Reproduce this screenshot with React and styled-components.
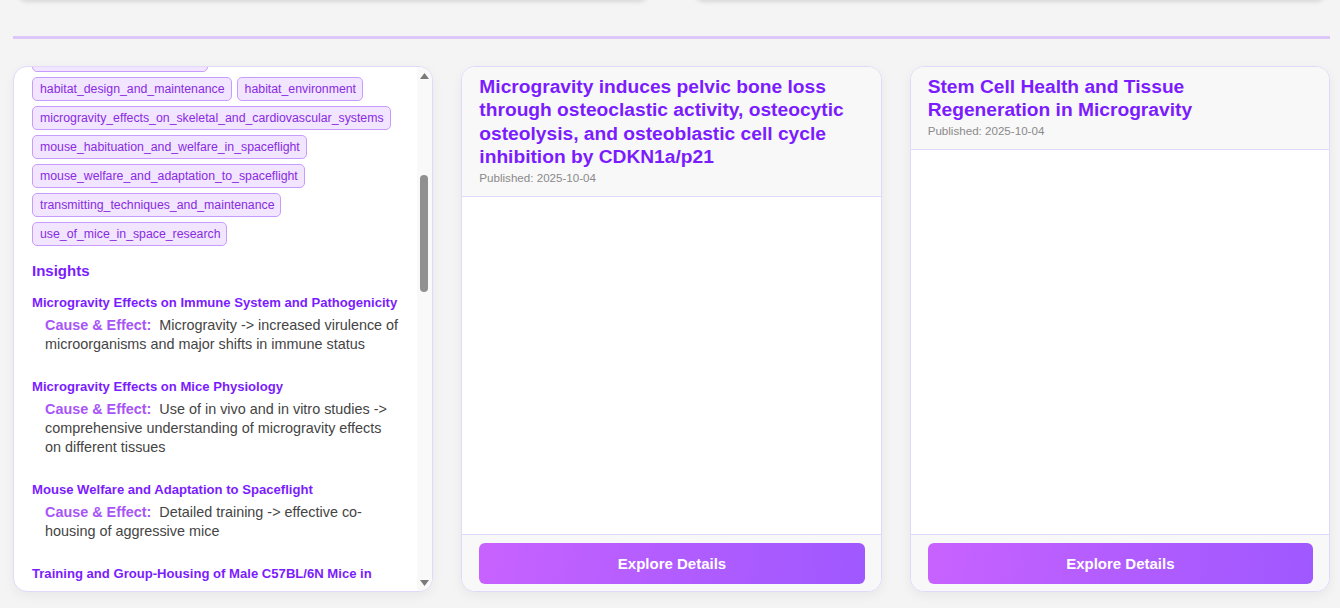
import React, { useLayoutEffect, useRef, useState } from "react"
import styled, { createGlobalStyle } from "styled-components"

const GlobalStyle = createGlobalStyle`
  html, body {
    margin: 0;
    padding: 0;
    background: #f4f4f4;
    font-family: "Liberation Sans", Arial, sans-serif;
  }
  * {
    box-sizing: border-box;
  }
`

const Page = styled.div`
  padding: 24px 10px 40px 13px;
`

const TopRow = styled.div`
  display: grid;
  grid-template-columns: 1fr 1fr;
  gap: 43px;
  padding: 0 3px;
`

const StatCard = styled.div`
  height: 140px;
  background: #fff;
  border-radius: 12px;
  box-shadow: 0 2px 4px rgba(0, 0, 0, 0.12);
`

const Divider = styled.div`
  height: 3px;
  background: #dcc7f8;
  margin: 36px 0 27px;
`

const Grid = styled.div`
  display: grid;
  grid-template-columns: repeat(3, 1fr);
  gap: 28px;
  height: 526px;
`

const Card = styled.div`
  display: flex;
  flex-direction: ${(p) => (p.$row ? "row" : "column")};
  min-height: 0;
  background: #fff;
  border: 1px solid #e2d8fb;
  border-radius: 14px;
  overflow: hidden;
  box-shadow: 0 4px 12px rgba(0, 0, 0, 0.05);
`

const DetailScroll = styled.div`
  flex: 1;
  min-width: 0;
  position: relative;
  overflow-y: scroll;
  scrollbar-width: none;
  padding: 0 17px 0 18px;

  &::-webkit-scrollbar {
    display: none;
  }
`

const Rail = styled.div`
  flex: 0 0 15px;
  display: flex;
  flex-direction: column;
  background: #f9f9f9;
`

const RailButton = styled.div`
  flex: 0 0 16px;
  display: flex;
  align-items: ${(p) => (p.$down ? "flex-start" : "flex-end")};
  justify-content: center;
  padding: ${(p) => (p.$down ? "5px" : "0")} 0 ${(p) => (p.$down ? "0" : "4px")};
  padding-right: 1px;
`

const RailTrack = styled.div`
  flex: 1;
  display: flex;
  flex-direction: column;
  align-items: flex-start;
  padding-left: 3px;
`

const Thumb = styled.div`
  width: 8px;
  background: #909090;
  border-radius: 4px;
`

const DetailContent = styled.div`
  min-height: 2203px;
  padding-bottom: 24px;
`

const DetailTitle = styled.h2`
  margin: 0;
  padding-top: 12px;
  font-size: 19.2px;
  line-height: 23px;
  font-weight: 700;
  color: #7b1cff;
`

const Published = styled.div`
  font-size: 11.6px;
  color: #8a8a8a;
  margin-top: 2px;
`

const SectionHeading = styled.h3`
  margin: ${(p) => p.$top || 20}px 0 ${(p) => p.$bottom || 12}px;
  font-size: 15px;
  line-height: 17px;
  font-weight: 700;
  color: #7b1cff;
`

const Summary = styled.p`
  margin: 0;
  font-size: 14.4px;
  line-height: 19px;
  color: #444;
`

const Tags = styled.div`
  display: flex;
  flex-wrap: wrap;
  gap: 5px 5px;
`

const Tag = styled.span`
  display: inline-block;
  padding: 4px 6px 4px 7px;
  font-size: 12.3px;
  line-height: 14px;
  color: #8a2be2;
  background: #f1e5ff;
  border: 1px solid #c89cff;
  border-radius: 5px;
`

const Insight = styled.div`
  margin-bottom: 21px;
`

const InsightTitle = styled.div`
  font-size: 13.1px;
  line-height: 24px;
  font-weight: 700;
  color: #7b1cff;
  margin-bottom: 1px;
`

const CauseText = styled.div`
  padding-left: 13px;
  font-size: 14.4px;
  line-height: 19px;
  color: #444;
`

const CauseLabel = styled.span`
  font-weight: 700;
  color: #a855f7;
  margin-right: 8px;
`

const CardHeader = styled.div`
  background: #f8f8f8;
  border-bottom: 1px solid #e2d8fb;
  padding: 8px 17px 12px;
`

const CardTitle = styled.h2`
  margin: 0;
  font-size: 19.2px;
  line-height: 23.4px;
  font-weight: 700;
  color: #7b1cff;
`

const CardBody = styled.div`
  flex: 1;
  background: #fff;
`

const CardFooter = styled.div`
  background: #f8f8f8;
  border-top: 1px solid #e2d8fb;
  padding: 8px 16px 7px 17px;
`

const ExploreButton = styled.button`
  display: block;
  width: 100%;
  height: 41px;
  border: none;
  border-radius: 6px;
  background: linear-gradient(100deg, #c862ff 0%, #b05cff 55%, #9f58ff 100%);
  color: #fff;
  font-family: "Liberation Sans", Arial, sans-serif;
  font-size: 15px;
  font-weight: 700;
  cursor: pointer;
`

const tagsBefore = [
  "animal_husbandry_in_space",
  "behavioral_monitoring",
  "bone_and_muscle_loss",
  "cardiovascular_adaptation",
  "environmental_monitoring_and_control_systems",
  "food_and_water_provisioning",
]

const tagsAfter = [
  "habitat_environment",
  "microgravity_effects_on_skeletal_and_cardiovascular_systems",
  "mouse_habituation_and_welfare_in_spaceflight",
  "mouse_welfare_and_adaptation_to_spaceflight",
  "transmitting_techniques_and_maintenance",
  "use_of_mice_in_space_research",
]

const insights = [
  {
    title: "Microgravity Effects on Immune System and Pathogenicity",
    text: "Microgravity -> increased virulence of microorganisms and major shifts in immune status",
  },
  {
    title: "Microgravity Effects on Mice Physiology",
    text: "Use of in vivo and in vitro studies -> comprehensive understanding of microgravity effects on different tissues",
  },
  {
    title: "Mouse Welfare and Adaptation to Spaceflight",
    text: "Detailed training -> effective co-housing of aggressive mice",
  },
  {
    title: "Training and Group-Housing of Male C57BL/6N Mice in Habitat Hardware",
    text: "Pre-flight habituation -> reduced stress and fighting during the mission",
  },
  {
    title: "Habitat Design and Maintenance",
    text: "Improved airflow and waste containment -> cleaner cages and healthier animals",
  },
  {
    title: "Skeletal and Cardiovascular Changes",
    text: "Prolonged unloading -> reduced bone density and altered cardiac function",
  },
  {
    title: "Telemetry and Transmitting Techniques",
    text: "Implanted transmitters -> continuous monitoring of body temperature and activity",
  },
  {
    title: "Environmental Control in Rodent Habitats",
    text: "Stable temperature and humidity -> consistent behavioural and physiological data",
  },
  {
    title: "Food and Water Provision",
    text: "Nutrient bars and lixit systems -> reliable intake across long missions",
  },
  {
    title: "Behavioural Monitoring",
    text: "Video recording -> detection of circling, grooming and huddling patterns",
  },
  {
    title: "Recovery After Return to Earth",
    text: "Re-loading of the skeleton -> partial restoration of bone mass within weeks",
  },
  {
    title: "Use of Mice in Space Research",
    text: "Genetic similarity to humans -> translational value of rodent spaceflight studies",
  },
]

const papers = [
  {
    title:
      "Microgravity induces pelvic bone loss through osteoclastic activity, osteocytic osteolysis, and osteoblastic cell cycle inhibition by CDKN1a/p21",
    date: "2025-10-04",
  },
  {
    title: "Stem Cell Health and Tissue Regeneration in Microgravity",
    date: "2025-10-04",
  },
]

const Arrow = ({ down }) => (
  <svg width="9" height="6" viewBox="0 0 9 6">
    <polygon points={down ? "0,0 9,0 4.5,6" : "0,6 9,6 4.5,0"} fill="#7a7a7a" />
  </svg>
)

const DetailPanel = () => {
  const scrollRef = useRef(null)
  const anchorRef = useRef(null)
  const trackRef = useRef(null)
  const [thumb, setThumb] = useState({ top: 0, height: 40 })

  useLayoutEffect(() => {
    const el = scrollRef.current
    if (!el || !anchorRef.current || !trackRef.current) return
    el.scrollTop = anchorRef.current.offsetTop - 10
    const track = trackRef.current.clientHeight
    const height = Math.round((track * el.clientHeight) / el.scrollHeight)
    const top = Math.round((el.scrollTop / (el.scrollHeight - el.clientHeight)) * (track - height))
    setThumb({ top, height })
  }, [])

  return (
    <Card $row>
      <DetailScroll ref={scrollRef}>
        <DetailContent>
          <DetailTitle>Rodent Research Reference Mission: Training, Habitat and Welfare of Mice in Spaceflight</DetailTitle>
          <Published>Published: 2025-10-04</Published>
          <SectionHeading>Summary</SectionHeading>
          <Summary>
            This study reviews how mice are prepared, housed and monitored during spaceflight missions,
            covering the design of habitat hardware, the training of animals for group housing and the
            physiological effects of microgravity on bone, muscle and the cardiovascular system.
          </Summary>
          <SectionHeading>Topics</SectionHeading>
          <Tags>
            {tagsBefore.map((t) => (
              <Tag key={t}>{t}</Tag>
            ))}
            <Tag ref={anchorRef}>habitat_design_and_maintenance</Tag>
            {tagsAfter.map((t) => (
              <Tag key={t}>{t}</Tag>
            ))}
          </Tags>
          <SectionHeading $top={16} $bottom={12}>Insights</SectionHeading>
          {insights.map((it) => (
            <Insight key={it.title}>
              <InsightTitle>{it.title}</InsightTitle>
              <CauseText>
                <CauseLabel>Cause &amp; Effect:</CauseLabel>
                {it.text}
              </CauseText>
            </Insight>
          ))}
        </DetailContent>
      </DetailScroll>
      <Rail>
        <RailButton>
          <Arrow />
        </RailButton>
        <RailTrack ref={trackRef}>
          <Thumb style={{ marginTop: thumb.top, height: thumb.height }} />
        </RailTrack>
        <RailButton $down>
          <Arrow down />
        </RailButton>
      </Rail>
    </Card>
  )
}

const PaperCard = ({ title, date }) => (
  <Card>
    <CardHeader>
      <CardTitle>{title}</CardTitle>
      <Published>Published: {date}</Published>
    </CardHeader>
    <CardBody />
    <CardFooter>
      <ExploreButton>Explore Details</ExploreButton>
    </CardFooter>
  </Card>
)

export default function App() {
  useLayoutEffect(() => {
    window.scrollTo(0, 164)
  }, [])

  return (
    <>
      <GlobalStyle />
      <Page>
        <TopRow>
          <StatCard />
          <StatCard />
        </TopRow>
        <Divider />
        <Grid>
          <DetailPanel />
          {papers.map((p) => (
            <PaperCard key={p.title} title={p.title} date={p.date} />
          ))}
        </Grid>
      </Page>
    </>
  )
}
